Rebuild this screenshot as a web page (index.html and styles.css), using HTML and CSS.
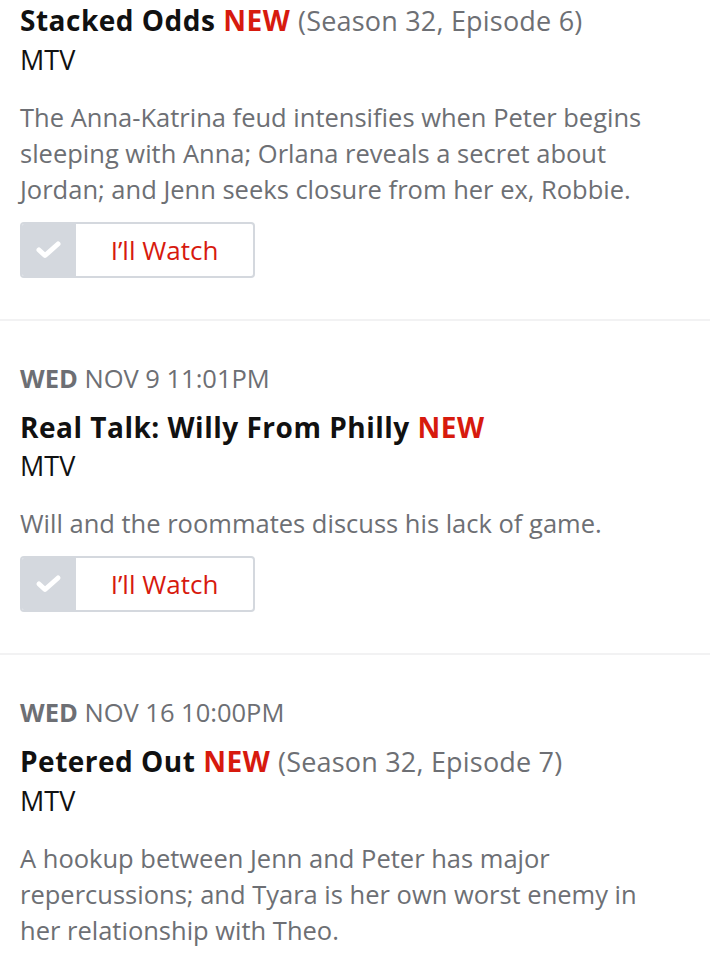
FILE: index.html
```html
<!DOCTYPE html>
<html lang="en">
<head>
<meta charset="utf-8">
<link rel="stylesheet" href="styles.css">
</head>
<body>
<div class="list">
  <section class="ep ep-first">
    <h3 class="title">Stacked Odds <span class="new">NEW</span> <span class="season">(Season 32, Episode 6)</span></h3>
    <div class="network">MTV</div>
    <p class="desc">The Anna-Katrina feud intensifies when Peter begins sleeping with Anna; Orlana reveals a secret about Jordan; and Jenn seeks closure from her ex, Robbie.</p>
    <button class="watch"><span class="check"><svg width="28" height="20" viewBox="0 0 28 20"><path d="M4 10 L10 15.5 L23 4" fill="none" stroke="#fff" stroke-width="5" stroke-linecap="round" stroke-linejoin="round"/></svg></span><span class="label">I’ll Watch</span></button>
  </section>
  <section class="ep">
    <div class="date"><b>WED</b> NOV 9 11:01PM</div>
    <h3 class="title">Real Talk: Willy From Philly <span class="new">NEW</span></h3>
    <div class="network">MTV</div>
    <p class="desc">Will and the roommates discuss his lack of game.</p>
    <button class="watch"><span class="check"><svg width="28" height="20" viewBox="0 0 28 20"><path d="M4 10 L10 15.5 L23 4" fill="none" stroke="#fff" stroke-width="5" stroke-linecap="round" stroke-linejoin="round"/></svg></span><span class="label">I’ll Watch</span></button>
  </section>
  <section class="ep">
    <div class="date"><b>WED</b> NOV 16 10:00PM</div>
    <h3 class="title">Petered Out <span class="new">NEW</span> <span class="season">(Season 32, Episode 7)</span></h3>
    <div class="network">MTV</div>
    <p class="desc">A hookup between Jenn and Peter has major repercussions; and Tyara is her own worst enemy in her relationship with Theo.</p>
  </section>
</div>
</body>
</html>
```
FILE: styles.css
```css
html, body {
  margin: 0;
  padding: 0;
  background: #fff;
}
body {
  font-family: "Open Sans", Lato, sans-serif;
  color: #111;
  width: 710px;
  overflow: hidden;
}
.ep {
  padding: 41px 20px 41px;
  border-bottom: 2px solid #f2f2f3;
}
.ep-first {
  padding-top: 0;
}
.date {
  font-size: 25.5px;
  line-height: 32px;
  color: #6d6f74;
  margin-bottom: 13px;
}
.date b {
  font-weight: 700;
}
.title {
  margin: 0;
  font-size: 28px;
  line-height: 40px;
  font-weight: 700;
  letter-spacing: 0.5px;
  color: #111;
}
.new {
  color: #d71a0e;
}
.season {
  font-weight: 400;
  font-size: 27px;
  letter-spacing: 0.2px;
  color: #6d6f74;
}
.network {
  margin-top: 1px;
  font-size: 27px;
  line-height: 36px;
  color: #111;
}
.desc {
  margin: 21px 0 0;
  max-width: 632px;
  font-size: 25.5px;
  line-height: 36px;
  color: #6d6f74;
}
.watch {
  display: flex;
  align-items: stretch;
  margin-top: 15px;
  width: 235px;
  height: 56px;
  padding: 0;
  border: 2px solid #d4d8de;
  border-radius: 4px;
  background: #fff;
  overflow: hidden;
  font-family: inherit;
}
.check {
  width: 54px;
  background: #d4d8de;
  display: flex;
  align-items: center;
  justify-content: center;
}
.label {
  flex: 1;
  display: flex;
  align-items: center;
  justify-content: center;
  font-size: 26px;
  color: #d71a0e;
}
```
